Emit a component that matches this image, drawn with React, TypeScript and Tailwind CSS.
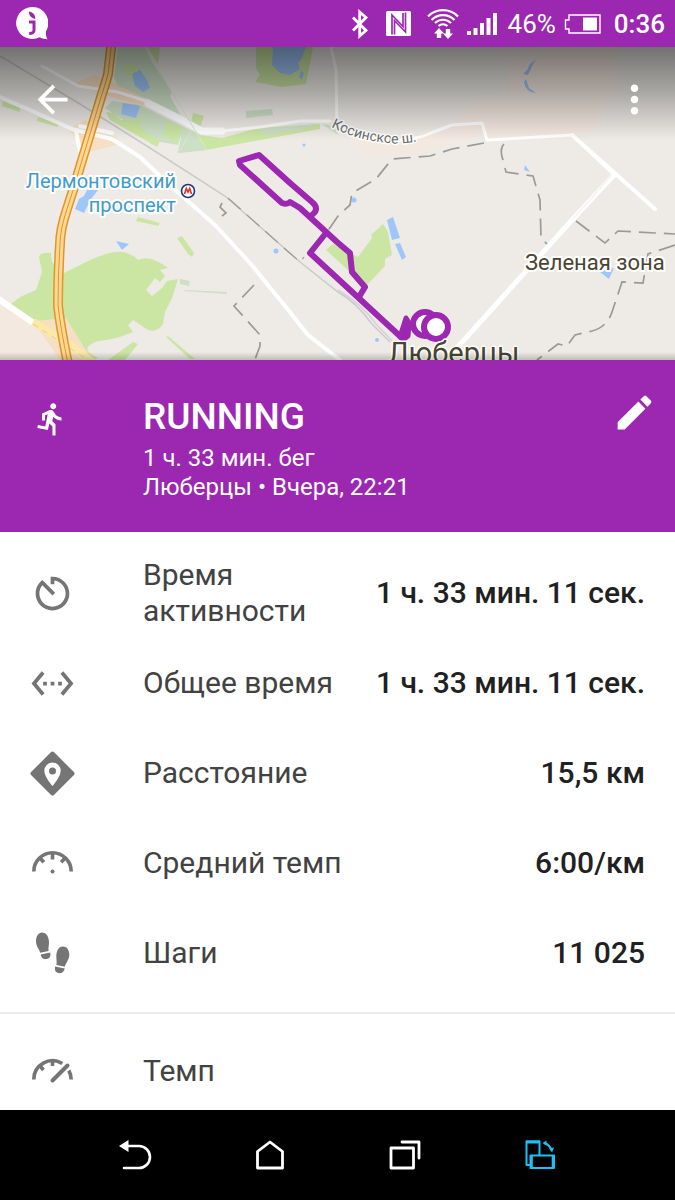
import type { ReactNode } from 'react'
import { MdArrowBack, MdDirectionsRun, MdEdit, MdMoreVert, MdSettingsEthernet } from 'react-icons/md'

interface Stat {
  label: string
  value: string
  icon: ReactNode
}

const ICON = 'h-[45px] w-[45px]'

/* ---------- Row icons ---------- */

function TimerIcon() {
  return (
    <svg viewBox="0 0 24 24" className={ICON} fill="currentColor" aria-hidden="true">
      <path d="M11 3v4h2V5.08c3.39.49 6 3.39 6 6.92 0 3.87-3.13 7-7 7s-7-3.13-7-7c0-1.68.59-3.22 1.58-4.42L12 13l1.41-1.41-6.8-6.8v.02C4.42 6.45 3 9.05 3 12c0 4.97 4.02 9 9 9 4.97 0 9-4.03 9-9s-4.03-9-9-9h-1z" />
    </svg>
  )
}

function DistanceIcon() {
  return (
    <svg viewBox="0 0 45 45" className={ICON} aria-hidden="true">
      <path d="M22.5 2.5 42.5 22.5 22.5 42.5 2.5 22.5Z" fill="currentColor" stroke="currentColor" strokeWidth="4" strokeLinejoin="round" />
      <path d="M22.5 11.5a8.2 8.2 0 0 0-8.2 8.2c0 6 8.2 15.3 8.2 15.3s8.2-9.3 8.2-15.3a8.2 8.2 0 0 0-8.2-8.2z" fill="#fff" />
      <circle cx="22.5" cy="20" r="3.5" fill="currentColor" />
    </svg>
  )
}

function GaugeIcon() {
  return (
    <svg viewBox="0 0 45 45" className={ICON} fill="none" stroke="currentColor" strokeWidth="3.6" aria-hidden="true">
      <path d="M3.8 30.5a18.7 18.7 0 0 1 37.4 0" />
      <path d="M22.5 11v7.5M10 17l3.8 4.2M35 17l-3.8 4.2" />
      <circle cx="22.5" cy="30.5" r="2" fill="currentColor" stroke="none" />
    </svg>
  )
}

function PaceIcon() {
  return (
    <svg viewBox="0 0 45 45" className={ICON} fill="none" stroke="currentColor" strokeWidth="3.6" aria-hidden="true">
      <path d="M3.8 30.5a18.7 18.7 0 0 1 28.5-16M38.8 21.5a18.7 18.7 0 0 1 2.4 9" />
      <path d="M22.5 11v6M10 17l3.5 4" />
      <path d="M22.5 31.5 37.5 16.5" strokeWidth="4" strokeLinecap="round" />
    </svg>
  )
}

function StepsIcon() {
  return (
    <svg viewBox="0 0 45 45" className={ICON} fill="currentColor" aria-hidden="true">
      <path d="M12 1.5c4.6 0 7 4.8 7 9.8 0 3.7-1 5.500-.4 8.700L10.200 21.800C9.500 18.500 6 15.500 6 10c0-4.800 2.500-8.500 6-8.500z" />
      <path d="M10.600 23.500l9.600-2c.9 3.600-.6 6-3.400 6.600-3 .6-5.600-.8-6.200-4.600z" />
      <path d="M33 15.500c-4.600 0-6.700 4.800-6.700 9.800 0 3.700.7 5.700.1 8.700l8.400 1.800c.8-3.500 4.500-7 4.500-12 0-4.800-2.700-8.300-6.300-8.300z" />
      <path d="M25.200 35.500l9.600 2c-.9 3.800-3.400 5.200-6.200 4.600-3-.6-4.300-3-3.400-6.600z" />
    </svg>
  )
}

const STATS: Stat[] = [
  { label: 'Время активности', value: '1 ч. 33 мин. 11 сек.', icon: <TimerIcon /> },
  { label: 'Общее время', value: '1 ч. 33 мин. 11 сек.', icon: <MdSettingsEthernet className={ICON} /> },
  { label: 'Расстояние', value: '15,5 км', icon: <DistanceIcon /> },
  { label: 'Средний темп', value: '6:00/км', icon: <GaugeIcon /> },
  { label: 'Шаги', value: '11 025', icon: <StepsIcon /> },
]

/* ---------- Status bar ---------- */

function StatusBar() {
  return (
    <div className="flex h-[47px] shrink-0 items-center bg-[#9c27b0] pr-[10px] pl-4 text-white">
      <svg viewBox="0 0 32 33" className="h-[33px] w-8" aria-hidden="true">
        <path d="M16 0a16 16 0 1 0 7.5 30.2c2.5 1.3 5 2 8 2-1.3-2-1.7-4-1.500-8A16 16 0 0 0 16 0z" fill="#fff" />
        <path d="M13 4.500c3.500.5 6.500 3 6.300 7.500-4-.8-6.500-3.500-6.300-7.500z" fill="#9c27b0" />
        <path d="M13 15h5v8.300c0 2.200-1.300 3.300-4.800 3.300" fill="none" stroke="#9c27b0" strokeWidth="3" />
      </svg>

      <svg viewBox="0 0 18 30" className="ml-auto h-[30px] w-[18px]" fill="none" stroke="currentColor" strokeWidth="2.8" aria-hidden="true">
        <path d="M2 8.500l13 13L8.700 27V3L15 8.500l-13 13" />
      </svg>
      <svg viewBox="0 0 25 25" className="ml-[17px] h-[25px] w-[25px]" aria-hidden="true">
        <rect width="25" height="25" rx="1.5" fill="#fff" />
        <path d="M6 23.500V4L17 15.500V2M19.500 1.500v19.500L8.500 9.500V23.500" fill="none" stroke="#9c27b0" strokeWidth="1.7" />
      </svg>
      <svg viewBox="0 0 32 31" className="ml-4 h-[31px] w-8" fill="none" stroke="currentColor" strokeWidth="2.2" aria-hidden="true">
        <path d="M1 8.500a21 21 0 0 1 30 0M4.500 12a16 16 0 0 1 23 0M8 15a11.500 11.500 0 0 1 16 0M11.500 18a7 7 0 0 1 9 0" />
        <path d="M12 20l5 5.500h-2.800V30H9.800v-4.500H7zM21 31l-5-5.500h2.800V21h4.400v4.500H26z" fill="currentColor" stroke="none" />
      </svg>
      <svg viewBox="0 0 30 24" className="ml-2 h-6 w-[30px]" fill="currentColor" aria-hidden="true">
        <path d="M0 19h4v4H0zM6.500 16h4v7h-4zM13 11h4v12h-4zM19.500 6h4v17h-4zM26 1h4v22h-4z" />
      </svg>
      <span className="ml-[11px] text-[26px] leading-8">46%</span>
      <svg viewBox="0 0 37 20" className="ml-2 h-5 w-[37px]" aria-hidden="true">
        <path d="M5 1h31v18H5v-4H1.500V6H5z" fill="none" stroke="#fff" strokeWidth="1.4" />
        <path d="M19 3.500h14v13H19z" fill="#fff" />
      </svg>
      <span className="ml-[13px] text-[26px] leading-8 font-medium">0:36</span>
    </div>
  )
}

/* ---------- Map ---------- */

const HIGHWAY = 'M112 40 108 74Q106 82 102 94L80 167Q74 188 67 209T60 244Q58 275 58 305 60 325 68 364'

const ROUTE =
  'M402 338 310 253 326 233M359 297 365 287 352 272 350 253 337 242 300 208 290 202Q287 205 282 203L240 165 239 161 259 155 290 183 312 202Q318 207 315 212L311 216'

function RouteMap() {
  return (
    <svg viewBox="0 47 675 313" className="block h-auto w-full" role="img" aria-label="Маршрут пробежки">
      <defs>
        <linearGradient id="scrim" x1="0" y1="0" x2="0" y2="1">
          <stop offset="0" stopColor="#000" stopOpacity="0.52" />
          <stop offset="0.5" stopColor="#000" stopOpacity="0.28" />
          <stop offset="1" stopColor="#000" stopOpacity="0" />
        </linearGradient>
        <linearGradient id="edge" x1="0" y1="0" x2="0" y2="1">
          <stop offset="0" stopColor="#000" stopOpacity="0" />
          <stop offset="1" stopColor="#000" stopOpacity="0.2" />
        </linearGradient>
        <path id="road-label" d="M331 127C349 136 366 141 388 143Q404 145 426 139" />
      </defs>
      <rect y="47" width="675" height="313" fill="#eeebe7" />

      {/* Built-up areas */}
      <g fill="#f4e9e1">
        <path d="M507 60 540 47H618L614 90 590 132 480 138 445 146 400 157 372 156 350 143 352 134 410 138 455 122 483 95 510 97z" />
        <path d="M0 300 60 321 90 360H0z" />
      </g>
      <g fill="#f7dfc4">
        <path d="M72 84 95 75 145 95 146 106 120 100 100 93z" />
        <path d="M68 129 85 120 115 137 121 144 88 152z" />
        <path d="M34 323 62 312 95 360H60z" />
      </g>

      {/* Parks */}
      <g fill="#cde0c6">
        <path d="M118 47H145L152 62 172 92 170 96 184 121 170 113 148 99 118 86 114 78z" />
        <path d="M112 101 140 105 184 127 178 145 160 142 150 138 105 108z" />
      </g>
      <g fill="#cbe6a3">
        <path d="M147 47H160L158 64z" />
        <path d="M124 70Q125 64 132 64L141 69 132 72 130 78z" />
        <path d="M106 112 113 113 121 120 136 120 143 116 140 125 147 134 160 141 157 147 110 120z" />
        <path d="M164 120 182 127 178 143 162 135 166 130z" />
        <path d="M184 127 200 135 222 138 258 128 320 124 320 129 206 150 178 153z" />
        <path d="M256 47H313L306 84 282 87 255 82 260 75 256 68z" />
        <path d="M39 257Q40 252 51 253L52 262 58 268 62 274 86 262Q105 253 115 252 128 250 138 260 150 254 168 268L160 270 165 276 160 282 155 278 146 290 152 296 162 288 167 281 178 279 172 298 165 312 163 324Q157 333 148 330L133 320 128 325 133 332Q115 340 98 341 84 346 88 352L98 358 92 360 66 318 54 319 36 321 11 304 20 297 36 290 42 272z" />
        <path d="M138 217 160 223 158 226 136 221z" />
        <path d="M182 236 194 253 192 257 188 254 177 238z" />
        <path d="M133 342 138 344 125 360H108z" />
        <path d="M168 336 195 359H190L166 337z" />
        <path d="M3 101 20 108V112L2 106zM38 117 58 124V127L37 121z" />
        <path d="M193 113 204 116 200 128 191 122z" />
        <path d="M326 250 333 244 358 257 372 238 371 235 383 224 388 232 392 255 385 259V266L366 286 350 272z" />
      </g>
      <g fill="#cde0c6">
        <path d="M183 127 195 133 206 150 178 153z" />
        <path d="M258 129 318 124 300 130 266 135z" />
        <path d="M246 111 272 109 273 115 246 118z" />
        <path d="M180 279 190 281 189 286 180 284z" />
        <path d="M185 290 227 292V294L184 291z" />
        <path d="M322 124 334 126 338 135z" />
      </g>

      {/* Water */}
      <g fill="#9fc6fb">
        <path d="M132 74 140 70 147 80 150 88 143 92 135 86z" />
        <path d="M123 103 140 106 136 118 121 114z" />
        <path d="M273 47H306L302 58 298 63 300 69 290 75 280 73 272 65z" />
        <path d="M301 71 304 73 302 80 299 77z" />
        <path d="M87 190 98 190 91 199 84 213 75 209 79 199 84 196z" />
        <path d="M116 241 129 244 122 250z" />
        <path d="M387 220 393 217 400 238 392 240z" />
        <path d="M395 244 400 243 406 257 402 260z" />
        <path d="M528 69Q529 63 536 60L533 64 528 75 523 74zM526 79 529 88 536 93Q526 93 524 82z" />
        <path d="M600 272 614 268 609 279z" />
        <path d="M525 165 530 172 524 170z" />
        <circle cx="276" cy="251" r="2.5" />
        <circle cx="354" cy="200" r="2.5" />
        <circle cx="377" cy="340" r="2" />
        <circle cx="304" cy="145" r="1.5" />
      </g>

      {/* Railways and tracks */}
      <g fill="none" stroke="#c9cbc9" strokeWidth="1.5">
        <path d="M0 56 80 104 150 148 225 196 300 262 338 292Q356 302 372 324L390 342" />
        <path d="M338 290Q362 304 376 324L395 344" stroke="#d8cfda" />
      </g>

      {/* Streets */}
      <g fill="none" stroke="#fff" strokeLinecap="round" strokeLinejoin="round">
        <path d="M0 97 30 110 72 129 112 139 140 157 160 176 190 203 215 225 250 263 285 306 308 335 340 360" strokeWidth="4" />
        <path d="M76 131 80 152M80 126 112 133" strokeWidth="4" />
        <path d="M42 66 78 86 118 92 146 101 202 131H222L260 127 300 121H330" strokeWidth="3" />
        <path d="M148 103 180 119 202 131H222" strokeWidth="7" />
        <path d="M331 47 336 70 337 125Q360 138 388 141 415 140 428 134L452 125 482 123 487 140 572 135 614 175" strokeWidth="3" />
        <path d="M572 135 655 209" strokeWidth="4" />
        <path d="M614 175 572 220 455 350" strokeWidth="5" />
        <path d="M146 48 173 94 207 150M192 130 180 150" strokeWidth="1" stroke="#dce9cf" />
        <path d="M0 300 32 322" strokeWidth="6" />
        <path d="M611 176 572 220" stroke="#eeebe7" strokeWidth="1" />
      </g>
      <path d="M33 322 64 341 92 362" fill="none" stroke="#fbe9a5" strokeWidth="8" />
      <path d="M33 324 85 358" fill="none" stroke="#d5cdbf" strokeWidth="1" strokeDasharray="6 5" />

      {/* District boundaries */}
      <g fill="none" stroke="#9b9a98" strokeWidth="1.7" strokeDasharray="17 8">
        <path d="M484 143 452 149 430 156 392 159 376 179 352 193 350 205 338 216 325 235" />
        <path d="M504 144Q499 149 503 160L506 172 533 176 540 200 541 238 547 244" />
        <path d="M576 221 605 243 618 231 675 234" />
        <path d="M675 245 648 254 643 283 622 282 612 312Q607 327 592 331L575 335 567 346 558 344 537 360" />
        <path d="M254 285 234 306 260 335V346L254 362" />
        <path d="M228 198 284 248 300 262 304 257" strokeWidth="1.2" />
        <path d="M222 203 220 207 226 213 222 216" strokeDasharray="none" />
      </g>

      {/* Highway */}
      <g fill="none">
        <path d={HIGHWAY} stroke="#e0952d" strokeWidth="10" />
        <path d={HIGHWAY} stroke="#fdd890" strokeWidth="7" />
        <path d={HIGHWAY} stroke="#e0952d" strokeWidth="1" />
      </g>

      {/* Labels */}
      <g stroke="#fff" strokeWidth="4" strokeLinejoin="round" className="font-[Roboto,sans-serif] [paint-order:stroke]">
        <text x="176" y="188" textAnchor="end" fill="#3f9bcb" className="text-[20px]">Лермонтовский</text>
        <text x="176" y="212" textAnchor="end" fill="#3f9bcb" className="text-[20px]">проспект</text>
        <text x="525" y="270" fill="#4a4430" className="text-[22px]">Зеленая зона</text>
        <text fill="#6b6b6b" strokeWidth="3" className="text-[14px]">
          <textPath href="#road-label">Косинское ш.</textPath>
        </text>
      </g>
      <circle cx="188" cy="191" r="6.5" fill="#fff" stroke="#1d3a80" strokeWidth="1.6" />
      <path d="M184.500 194 186.300 188.500 188 192 189.700 188.500 191.500 194" fill="none" stroke="#e0332c" strokeWidth="1.7" />

      {/* Track */}
      <g fill="none" stroke="#9c27b0" strokeWidth="6" strokeLinecap="round" strokeLinejoin="round">
        <path d={ROUTE} />
        <path d="M406 318 409 323 408 336 404 339 400 337zM409 324 416 325" fill="#9c27b0" strokeWidth="5" />
        <circle cx="425" cy="324" r="12" fill="#fff" />
        <circle cx="436" cy="327" r="12" fill="#fff" />
      </g>
      <text x="388" y="363" fill="#4a4430" stroke="#fff" strokeWidth="3" strokeLinejoin="round" className="font-[Roboto,sans-serif] text-[29px] [paint-order:stroke]">
        Люберцы
      </text>

      <rect y="47" width="675" height="93" fill="url(#scrim)" />
      <rect y="352" width="675" height="8" fill="url(#edge)" />
    </svg>
  )
}

/* ---------- System navigation ---------- */

function NavBar() {
  const icon = 'h-9 w-9'
  return (
    <nav className="grid h-[90px] shrink-0 grid-cols-4 place-items-center bg-black px-[10%] text-white">
      <button type="button" aria-label="Назад">
        <svg viewBox="0 0 36 36" className={icon} fill="none" stroke="currentColor" strokeWidth="2.6" strokeLinecap="round">
          <path d="M9 9h13a11 11 0 0 1 0 22H7" />
          <path d="M2 9l9.500-6v12z" fill="currentColor" stroke="none" />
        </svg>
      </button>
      <button type="button" aria-label="Домой">
        <svg viewBox="0 0 36 36" className={icon} fill="none" stroke="currentColor" strokeWidth="2.8" strokeLinejoin="round">
          <path d="M18 5 30.500 14.500V31h-25V14.500z" />
        </svg>
      </button>
      <button type="button" aria-label="Недавние приложения">
        <svg viewBox="0 0 36 36" className={icon} fill="none" stroke="currentColor" strokeWidth="2.8" strokeLinejoin="round" strokeLinecap="round">
          <path d="M4 11h22.500v20H4zM15 5h17v16" />
        </svg>
      </button>
      <button type="button" aria-label="Повернуть экран" className="text-[#1fc0f5]">
        <svg viewBox="0 0 36 36" className={icon} fill="none" stroke="currentColor" strokeWidth="2" strokeLinejoin="round">
          <path d="M8 28H4.500V4.500H17.500V18" />
          <path d="M4 5h14" strokeWidth="3" />
          <path d="M8.500 18.500h23.500V31H8.500z" />
          <path d="M9.500 18v13M31 18v13" strokeWidth="2.6" />
          <path d="M22 6q5.500 1.500 7.500 7" strokeWidth="2.2" />
          <path d="M20.500 6 24.500 3.500V8.500zM30 15.500 27 11.500 32 10.500z" fill="currentColor" stroke="none" />
        </svg>
      </button>
    </nav>
  )
}

export default function App() {
  return (
    <div className="flex h-screen flex-col bg-white font-[Roboto,'Noto_Sans',sans-serif]">
      <StatusBar />

      <main className="min-h-0 flex-1 overflow-y-auto [scrollbar-width:none]">
        <div className="relative">
          <RouteMap />
          <div className="absolute inset-x-0 top-[30px] flex justify-between pr-[18px] pl-[30px] text-white">
            <button type="button" aria-label="Назад">
              <MdArrowBack className={ICON} />
            </button>
            <button type="button" aria-label="Ещё">
              <MdMoreVert className={ICON} />
            </button>
          </div>
        </div>

        {/* Activity summary */}
        <header className="flex items-start bg-[#9c27b0] pt-[30px] pr-[18px] pb-[30px] pl-[30px] text-white">
          <div className="mr-[68px] flex h-[54px] w-[45px] items-center justify-center pt-1 pr-1">
            <MdDirectionsRun className="h-9 w-9" />
          </div>
          <div className="flex-1">
            <h1 className="text-[37px] leading-[54px] font-medium">RUNNING</h1>
            <p className="text-[24px] leading-[29px]">1 ч. 33 мин. бег</p>
            <p className="text-[24px] leading-[29px]">Люберцы • Вчера, 22:21</p>
          </div>
          <button type="button" aria-label="Изменить">
            <MdEdit className={ICON} />
          </button>
        </header>

        {/* Stats */}
        <dl className="border-b-2 border-[#ebebeb] pt-4 pb-[14px]">
          {STATS.map(stat => (
            <div key={stat.label} className="flex h-[90px] items-center px-[30px]">
              <dt className="flex flex-1 items-center text-[30px] leading-9 text-[#424242]">
                <span className="mr-[68px] shrink-0 text-[#757575]">{stat.icon}</span>
                {stat.label}
              </dt>
              <dd className="shrink-0 pl-4 text-[30px] leading-9 font-medium text-[#212121]">{stat.value}</dd>
            </div>
          ))}
        </dl>

        {/* Pace chart heading */}
        <section className="mt-3 flex h-[90px] items-center px-[30px]">
          <span className="mr-[68px] shrink-0 text-[#757575]">
            <PaceIcon />
          </span>
          <h2 className="text-[30px] leading-9 text-[#424242]">Темп</h2>
        </section>
      </main>

      <NavBar />
    </div>
  )
}
